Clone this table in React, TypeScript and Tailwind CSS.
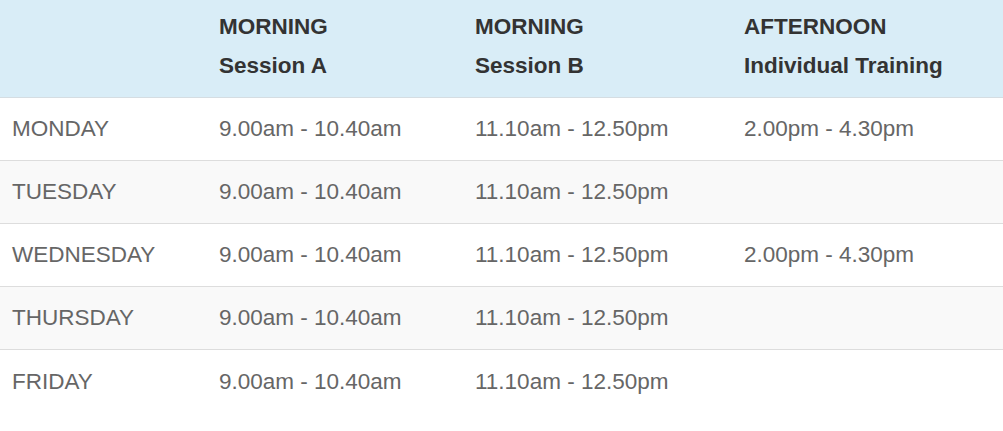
type Row = { day: string; a: string; b: string; pm: string };

const ROWS: Row[] = [
  { day: "MONDAY", a: "9.00am - 10.40am", b: "11.10am - 12.50pm", pm: "2.00pm - 4.30pm" },
  { day: "TUESDAY", a: "9.00am - 10.40am", b: "11.10am - 12.50pm", pm: "" },
  { day: "WEDNESDAY", a: "9.00am - 10.40am", b: "11.10am - 12.50pm", pm: "2.00pm - 4.30pm" },
  { day: "THURSDAY", a: "9.00am - 10.40am", b: "11.10am - 12.50pm", pm: "" },
  { day: "FRIDAY", a: "9.00am - 10.40am", b: "11.10am - 12.50pm", pm: "" },
];

const HEADERS = [
  { top: "MORNING", bottom: "Session A" },
  { top: "MORNING", bottom: "Session B" },
  { top: "AFTERNOON", bottom: "Individual Training" },
];

const COLS = "grid grid-cols-[207px_256px_269px_1fr]";

export default function App() {
  return (
    <div className="w-[1003px] h-[431px] bg-white font-['Liberation_Sans',Arial,sans-serif] text-[22.5px]">
      <div className={`${COLS} bg-[#d9edf7] border-b border-[#d5dde2] h-[98px] pt-[7px] text-[#333333] font-bold leading-[39px]`}>
        <div />
        {HEADERS.map((h, i) => (
          <div key={i} className="px-3">
            <div>{h.top}</div>
            <div>{h.bottom}</div>
          </div>
        ))}
      </div>
      {ROWS.map((row, i) => (
        <div
          key={row.day}
          className={`${COLS} h-[63px] items-center text-[#666666] ${
            i % 2 === 1 ? "bg-[#f9f9f9]" : "bg-white"
          } ${i < ROWS.length - 1 ? "border-b border-[#dddddd]" : ""}`}
        >
          <div className="px-3">{row.day}</div>
          <div className="px-3">{row.a}</div>
          <div className="px-3">{row.b}</div>
          <div className="px-3">{row.pm}</div>
        </div>
      ))}
    </div>
  );
}
